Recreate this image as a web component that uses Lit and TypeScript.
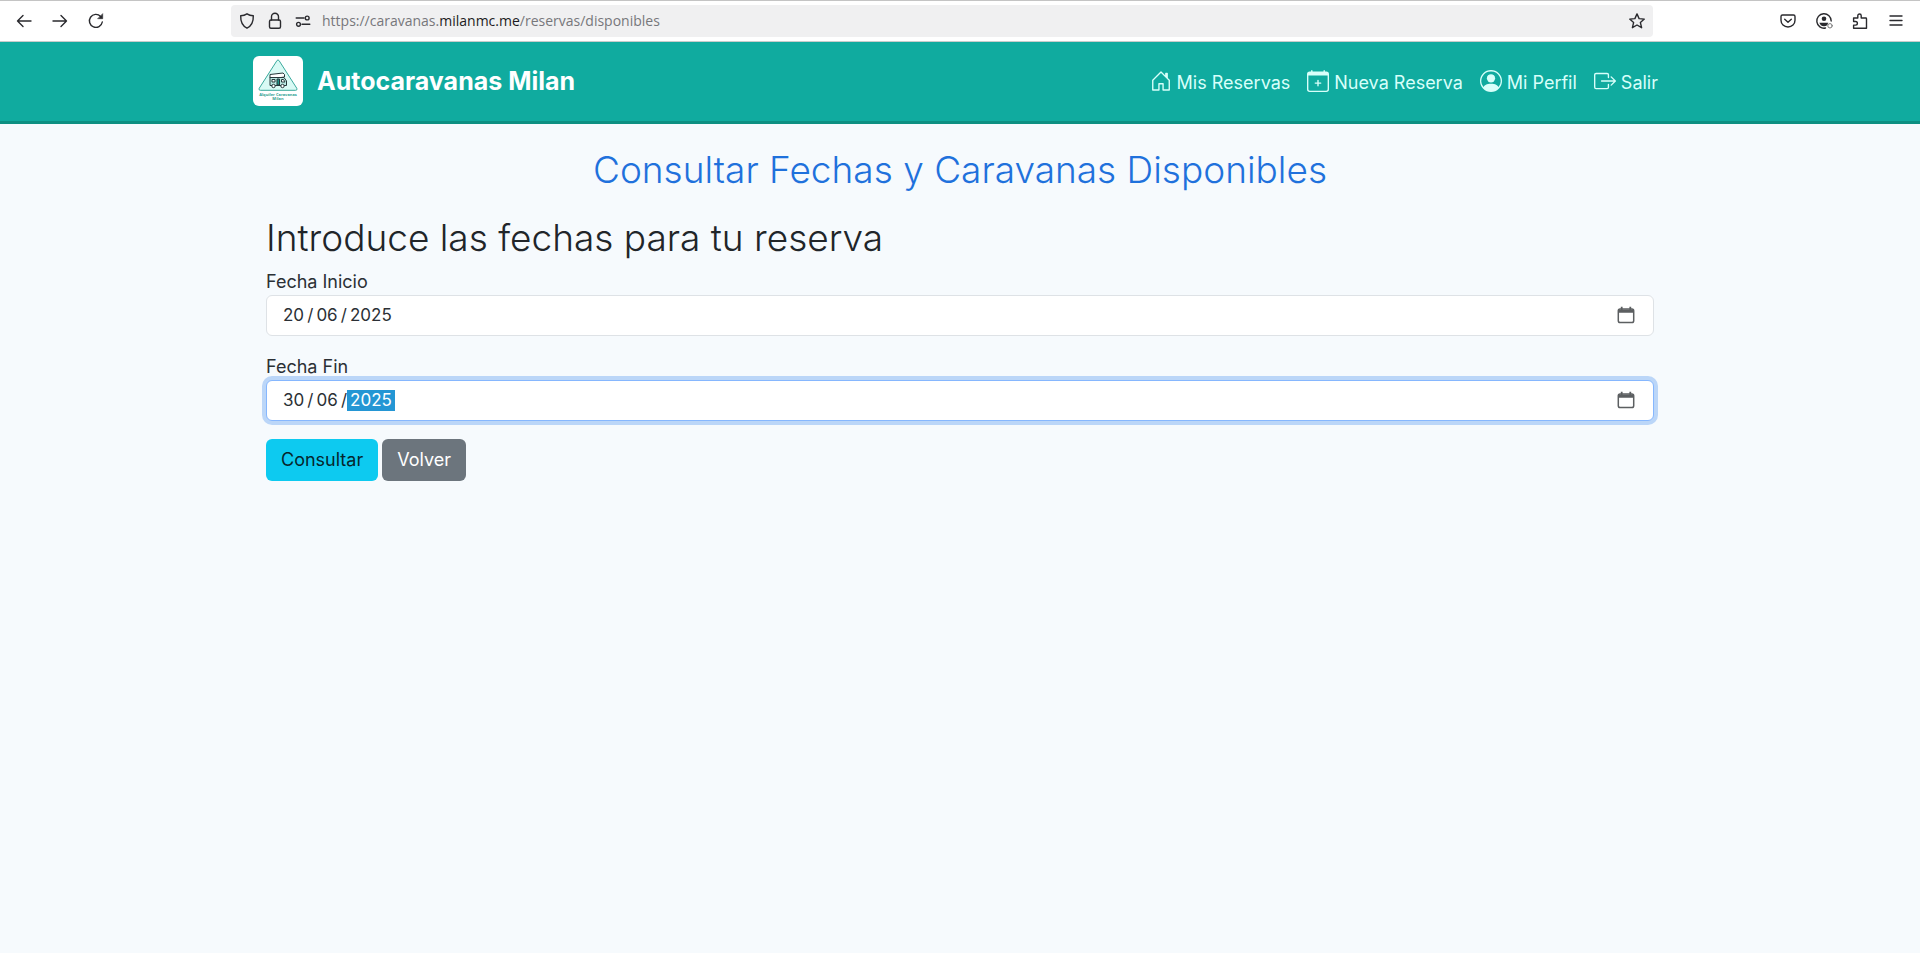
import { LitElement, html, css, svg } from "lit";
import { customElement, property } from "lit/decorators.js";

const stroke = (body: unknown, size = 18) => html`<svg class="glyph" width=${size} height=${size} viewBox="0 0 18 18" fill="none" stroke="currentColor" stroke-width="1.4" stroke-linecap="round" stroke-linejoin="round" aria-hidden="true">${body}</svg>`;
const solid = (body: unknown, size = 22) => html`<svg class="glyph" width=${size} height=${size} viewBox="0 0 16 16" fill="currentColor" aria-hidden="true">${body}</svg>`;

const icons = {
  back: stroke(svg`<path d="M16 9H2.500M8 3.500 2.500 9l5.500 5.500"/>`),
  forward: stroke(svg`<path d="M2 9h13.500M10 3.500 15.500 9 10 14.500"/>`),
  reload: stroke(svg`<path d="M15.300 10A6.500 6.500 0 1 1 13.600 4.400"/><path d="M15.700 2v4.700H11z" fill="currentColor" stroke-width=".6"/>`),
  shield: stroke(svg`<path d="M9 1.800c2 1.300 4 1.800 6.300 2 .2 5.300-1.400 10-6.300 12.400C4.100 13.800 2.500 9.100 2.700 3.800 5 3.600 7 3.100 9 1.800z"/>`),
  lock: stroke(svg`<rect x="3.500" y="8" width="11" height="8.300" rx="1.500"/><path d="M5.500 8V4.800a3.500 3.500 0 0 1 7 0V8"/>`),
  settings: stroke(svg`<path d="M2.200 6H10M8 12.300h7.800"/><circle cx="13.200" cy="6" r="1.900"/><circle cx="4.500" cy="12.300" r="1.900"/>`),
  star: stroke(svg`<path d="M9 1.900l2.100 4.700 5.200.5-3.900 3.500 1.200 5.100L9 13l-4.600 2.700 1.200-5.100L1.700 7.100l5.200-.5z"/>`),
  pocket: stroke(svg`<path d="M3.500 3h11c.9 0 1.500.6 1.500 1.500v3.800C16 12.200 13 15 9 15s-7-2.800-7-6.700V4.500C2 3.600 2.600 3 3.500 3z"/><path d="M5.700 7.200 9 10.200l3.300-3"/>`),
  account: stroke(svg`<path d="M10.500 16A7.200 7.200 0 1 1 16.200 9"/><circle cx="9" cy="6.700" r="2.300" fill="currentColor" stroke="none"/><path d="M4.300 10.700h8.900l-1 2.600c-2 1.300-4.400 1.300-6.400 0z" fill="currentColor" stroke="none"/><circle cx="15" cy="13.800" r="2.200" stroke="#777" stroke-width="1"/>`),
  extension: stroke(svg`<path d="M2.600 6h4.200V3.700a1.700 1.700 0 0 1 3.400 0V6h4.600q.7 0 .7.700v9.600H2.600v-3.200h2a1.700 1.700 0 0 0 0-3.600h-2z"/>`),
  menu: stroke(svg`<path d="M3 4h12M3 8.500h12M3 13h12"/>`),
  home: solid(svg`<path d="M8.354 1.146a.5.5 0 0 0-.708 0l-6 6A.5.5 0 0 0 1.500 7.500v7a.5.5 0 0 0 .5.5h4.500a.5.5 0 0 0 .5-.5v-4h2v4a.5.5 0 0 0 .5.5H14a.5.5 0 0 0 .5-.5v-7a.5.5 0 0 0-.146-.354L13 5.793V2.500a.5.5 0 0 0-.5-.5h-1a.5.5 0 0 0-.5.5v1.293zM2.500 14V7.707l5.500-5.500 5.500 5.500V14H10v-4a.5.5 0 0 0-.5-.5h-3a.5.5 0 0 0-.5.5v4z"/>`),
  calendarPlus: solid(svg`<path d="M8 7a.5.5 0 0 1 .5.5V9H10a.5.5 0 0 1 0 1H8.500v1.500a.5.5 0 0 1-1 0V10H6a.5.5 0 0 1 0-1h1.500V7.500A.5.5 0 0 1 8 7"/><path d="M3.500 0a.5.5 0 0 1 .5.5V1h8V.5a.5.5 0 0 1 1 0V1h1a2 2 0 0 1 2 2v11a2 2 0 0 1-2 2H2a2 2 0 0 1-2-2V3a2 2 0 0 1 2-2h1V.5a.5.5 0 0 1 .5-.5M1 4v10a1 1 0 0 0 1 1h12a1 1 0 0 0 1-1V4z"/>`),
  person: solid(svg`<path d="M11 6a3 3 0 1 1-6 0 3 3 0 0 1 6 0"/><path fill-rule="evenodd" d="M0 8a8 8 0 1 1 16 0A8 8 0 0 1 0 8m8-7a7 7 0 0 0-5.468 11.370C3.242 11.226 4.805 10 8 10s4.757 1.225 5.468 2.370A7 7 0 0 0 8 1"/>`),
  exit: solid(svg`<path fill-rule="evenodd" d="M10 12.500a.5.5 0 0 1-.5.5h-8a.5.5 0 0 1-.5-.5v-9a.5.5 0 0 1 .5-.5h8a.5.5 0 0 1 .5.5v2a.5.5 0 0 0 1 0v-2A1.500 1.500 0 0 0 9.500 2h-8A1.500 1.500 0 0 0 0 3.500v9A1.500 1.500 0 0 0 1.500 14h8a1.500 1.500 0 0 0 1.500-1.500v-2a.5.5 0 0 0-1 0z"/><path fill-rule="evenodd" d="M15.854 8.354a.5.5 0 0 0 0-.708l-3-3a.5.5 0 0 0-.708.708L14.293 7.500H5.500a.5.5 0 0 0 0 1h8.793l-2.147 2.146a.5.5 0 0 0 .708.708z"/>`),
  calendar: html`<svg class="glyph" width="18" height="18" viewBox="0 0 18 18" fill="none" aria-hidden="true"><rect x="1.300" y="3" width="15.400" height="13.500" rx="1.800" stroke="currentColor" stroke-width="1.500"/><path d="M1 3.500h16v3.300H1zM3.800.8h1.800v3H3.800zM12.400.8h1.800v3h-1.800z" fill="currentColor"/></svg>`,
};

@customElement("browser-bar")
class BrowserBar extends LitElement {
  static styles = css`
    :host { display: block; }
    .bar { display: flex; align-items: center; height: 42px; box-sizing: border-box; border-top: 1px solid #c4c4c4; border-bottom: 1px solid #c8cccb; background: #fff; color: #2a2a2e; padding: 0 15px; }
    button { appearance: none; border: 0; background: none; padding: 0; margin: 0; color: inherit; display: flex; }
    .glyph { display: block; }
    .moves, .tools { display: flex; gap: 18px; }
    .moves { flex: 1 1 216px; }
    .tools { flex: 1 1 252px; justify-content: flex-end; }
    .address { flex: 0 1 1422px; min-width: 0; height: 32px; box-sizing: border-box; display: flex; align-items: center; gap: 10px; padding: 0 7px; border-radius: 4px; background: #f0f0f1; }
    .url { flex: 1; min-width: 0; overflow: hidden; white-space: nowrap; font: 14px/20px "Open Sans", "Noto Sans", sans-serif; color: #77777b; }
    .host { color: #1c1b22; }
  `;
  render() {
    return html`
      <div class="bar">
        <div class="moves">
          <button aria-label="Atrás">${icons.back}</button>
          <button aria-label="Adelante">${icons.forward}</button>
          <button aria-label="Recargar">${icons.reload}</button>
        </div>
        <div class="address">
          <button aria-label="Protección">${icons.shield}</button>
          <button aria-label="Conexión segura">${icons.lock}</button>
          <button aria-label="Permisos">${icons.settings}</button>
          <span class="url">https://caravanas.<span class="host">milanmc.me</span>/reservas/disponibles</span>
          <button aria-label="Añadir a marcadores">${icons.star}</button>
        </div>
        <div class="tools">
          <button aria-label="Pocket">${icons.pocket}</button>
          <button aria-label="Cuenta">${icons.account}</button>
          <button aria-label="Extensiones">${icons.extension}</button>
          <button aria-label="Menú">${icons.menu}</button>
        </div>
      </div>
    `;
  }
}

@customElement("site-header")
class SiteHeader extends LitElement {
  static styles = css`
    :host { display: block; background: #10ab9f; border-bottom: 3px solid #0d8f82; color: #fff; }
    .inner { box-sizing: border-box; max-width: 1414px; margin: 0 auto; padding: 14px 9px 15px 0; display: flex; align-items: center; justify-content: space-between; }
    a { color: inherit; text-decoration: none; }
    .brand { display: flex; align-items: center; gap: 14px; font: 700 25px/30px Inter, sans-serif; }
    .logo { width: 50px; height: 50px; border-radius: 6px; display: block; }
    .logo-text { font: 700 4px "Open Sans", sans-serif; }
    nav { display: flex; gap: 17px; font: 18px/26px Inter, sans-serif; color: #d8fffa; padding-top: 4px; }
    nav a { display: flex; align-items: center; gap: 5px; }
    .glyph { display: block; margin-bottom: 4px; }
  `;
  render() {
    return html`
      <div class="inner">
        <a class="brand" href="#">
          <svg class="logo" viewBox="0 0 50 50" role="img" aria-label="Alquiler Caravanas Milan">
            <rect width="50" height="50" fill="#fff" />
            <path d="M24 4.500q1-1.200 2 0L43.800 32.300q.8 2-1.200 2H7.400q-2 0-1.200-2z" fill="#d9faf5" stroke="#3aa99c" stroke-width="1" />
            <g stroke="#26383b" stroke-width="1" stroke-linejoin="round">
              <path d="M17 18.500l13-1.500 1.500 1.500v2.500l-7 1h-7.500z" fill="#fff" />
              <path d="M17 21.500h14l2.500 3.500v4.500H17z" fill="#b9e7e1" />
              <path d="M19 23.500h3v2.500h-3zM28.500 23.500h2l1.500 2.500h-3.500z" fill="#fff" />
              <path d="M24 23h2.500v6H24z" fill="#1f9487" />
              <circle cx="20.500" cy="30" r="1.700" fill="#fff" /><circle cx="29.500" cy="30" r="1.700" fill="#fff" />
            </g>
            <g class="logo-text" fill="#2f9f93" text-anchor="middle"><text x="25" y="40">Alquiler Caravanas</text><text x="25" y="44">Milan</text></g>
          </svg>
          <span>Autocaravanas Milan</span>
        </a>
        <nav>
          <a href="#">${icons.home}<span>Mis Reservas</span></a>
          <a href="#">${icons.calendarPlus}<span>Nueva Reserva</span></a>
          <a href="#">${icons.person}<span>Mi Perfil</span></a>
          <a href="#">${icons.exit}<span>Salir</span></a>
        </nav>
      </div>
    `;
  }
}

@customElement("date-field")
class DateField extends LitElement {
  @property() label = "";
  @property() value = "";
  @property({ type: Boolean }) active = false;

  static styles = css`
    :host { display: block; font: 18px/26px Inter, sans-serif; color: #2b3035; }
    label { display: block; }
    .box { display: flex; align-items: center; box-sizing: border-box; height: 41px; padding: 0 18px 0 16px; background: #fff; border: 1px solid #dee2e6; border-radius: 6px; }
    .box:focus-within { border-color: #86b7fe; box-shadow: 0 0 0 4px #bbd6f8; }
    input { flex: 1; min-width: 0; border: 0; outline: 0; padding: 0; margin: 0; background: none; font: 17px/21px Inter, sans-serif; color: inherit; }
    input::selection { background: #2496d4; color: #fff; }
    button { appearance: none; border: 0; background: none; padding: 0 0 2px; color: #5c5f61; display: flex; }
  `;
  firstUpdated() {
    if (!this.active) return;
    const input = this.renderRoot.querySelector("input")!;
    input.focus();
    input.setSelectionRange(input.value.lastIndexOf("/") + 1, input.value.length);
  }
  render() {
    // Thin spaces pad each segment of the date.
    const text = this.value.split("/").join("\u2009/\u2009") + "\u2009";
    return html`
      <label for="date">${this.label}</label>
      <div class="box">
        <input id="date" type="text" autocomplete="off" .value=${text} />
        <button type="button" aria-label="Abrir calendario">${icons.calendar}</button>
      </div>
    `;
  }
}

@customElement("app-root")
class AppRoot extends LitElement {
  static styles = css`
    :host { display: block; min-height: 100vh; background: #f6fafd; color: #212529; font: 18px/26px Inter, sans-serif; }
    main { max-width: 1388px; margin: 0 auto; padding: 25px 12px; }
    h1, h2 { font-weight: 300; font-size: 37px; line-height: 42px; margin: 0; }
    h1 { color: #1f71dc; text-align: center; margin-bottom: 26px; }
    h2 { margin-bottom: 10px; }
    form { display: flex; flex-direction: column; gap: 18px; }
    .actions { display: flex; gap: 4px; }
    button { appearance: none; border: 0; border-radius: 6px; padding: 8px 15px; font: inherit; }
    .primary { background: #0dcaf0; color: #06262d; }
    .secondary { background: #6c757d; color: #fff; }
  `;
  render() {
    return html`
      <browser-bar></browser-bar>
      <site-header></site-header>
      <main>
        <h1>Consultar Fechas y Caravanas Disponibles</h1>
        <h2>Introduce las fechas para tu reserva</h2>
        <form>
          <date-field label="Fecha Inicio" value="20/06/2025"></date-field>
          <date-field label="Fecha Fin" value="30/06/2025" active></date-field>
          <div class="actions">
            <button class="primary" type="button">Consultar</button>
            <button class="secondary" type="button">Volver</button>
          </div>
        </form>
      </main>
    `;
  }
}
